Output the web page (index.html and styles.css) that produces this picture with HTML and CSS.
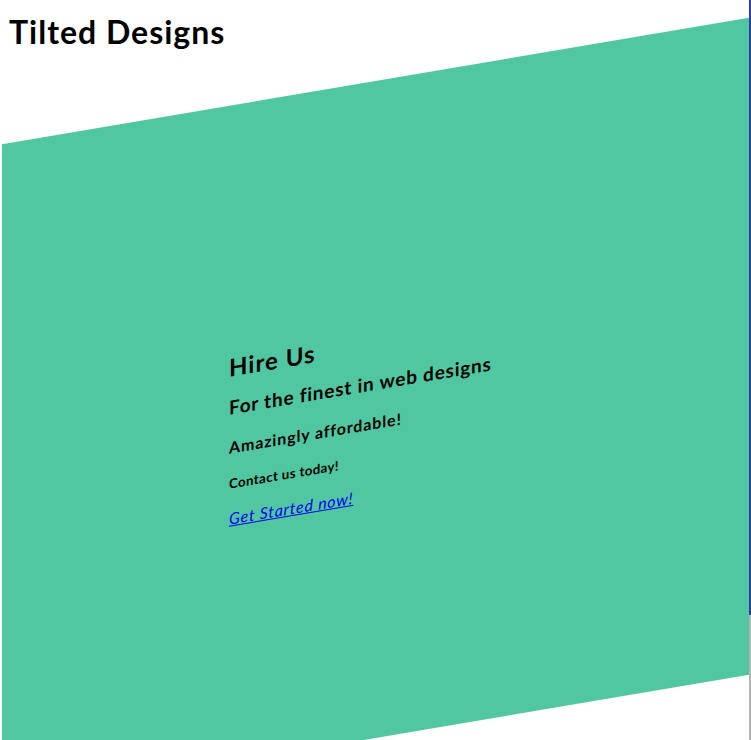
FILE: index.html
```html
<!DOCTYPE html>
<html lang="en">
<head>
<meta charset="utf-8">
<title>Tilted Designs</title>
<link rel="stylesheet" href="styles.css">
</head>
<body>
<header class="site-header">
  <h1 class="site-title">Tilted Designs</h1>
</header>
<section class="tilted">
  <div class="pitch">
    <h2 class="pitch-title">Hire Us</h2>
    <h3 class="pitch-sub">For the finest in web designs</h3>
    <h4 class="pitch-price">Amazingly affordable!</h4>
    <h5 class="pitch-contact">Contact us today!</h5>
    <a class="pitch-link" href="#">Get Started now!</a>
  </div>
</section>
<div class="edge-strip"><div class="edge-blue"></div><div class="edge-gray"></div></div>
</body>
</html>
```

FILE: styles.css
```css
html, body {
  margin: 0;
  padding: 0;
  background: #ffffff;
  overflow: hidden;
  height: 740px;
}
body {
  font-family: "Lato", "Liberation Sans", sans-serif;
  color: #000;
}
.site-header {
  padding: 13px 0 0 9px;
  height: 37px;
}
.site-title {
  margin: 0;
  font-size: 32px;
  line-height: 38.4px;
  font-weight: 700;
  letter-spacing: 1px;
  white-space: nowrap;
}
.tilted {
  margin: 31px 0 0 2px;
  width: 747px;
  height: 657px;
  background: #51c7a1;
  transform: skewY(-9.6deg);
  transform-origin: 50% 50%;
}
.pitch {
  padding: 247px 0 0 227px;
  display: flex;
  flex-direction: column;
  align-items: flex-start;
}
.pitch-title, .pitch-sub, .pitch-price, .pitch-contact {
  margin: 0;
  font-weight: 700;
  line-height: 30px;
  white-space: nowrap;
}
.pitch-title { font-size: 24px; letter-spacing: 1px; }
.pitch-sub { font-size: 19px; margin-top: 10px; letter-spacing: 0.75px; }
.pitch-price { font-size: 16px; margin-top: 10px; letter-spacing: 0.85px; }
.pitch-contact { font-size: 13.3px; margin-top: 6px; letter-spacing: 0.35px; }
.pitch-link {
  margin-top: 5px;
  font-size: 16px;
  line-height: 30px;
  font-style: italic;
  letter-spacing: 0.75px;
  color: #0000ee;
  text-decoration: underline;
  white-space: nowrap;
}
.edge-strip {
  position: fixed;
  top: 0;
  right: 0;
  width: 2px;
  height: 740px;
  display: flex;
  flex-direction: column;
}
.edge-blue { height: 615px; background: #2f3f9a; }
.edge-gray { flex: 1; background: #b4b4b4; }
```
